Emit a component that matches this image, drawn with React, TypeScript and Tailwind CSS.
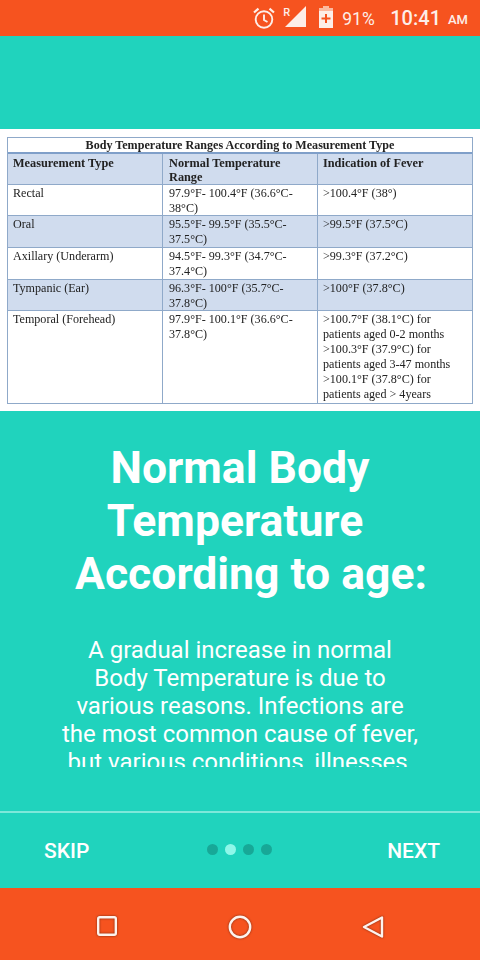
const rows = [
  { a: "Rectal", b: ["97.9°F- 100.4°F (36.6°C-", "38°C)"], c: [">100.4°F (38°)"], h: "h-[31px]", bg: "bg-white" },
  { a: "Oral", b: ["95.5°F- 99.5°F (35.5°C-", "37.5°C)"], c: [">99.5°F (37.5°C)"], h: "h-[32px]", bg: "bg-[#d0dcee]" },
  { a: "Axillary (Underarm)", b: ["94.5°F- 99.3°F (34.7°C-", "37.4°C)"], c: [">99.3°F (37.2°C)"], h: "h-[32px]", bg: "bg-white" },
  { a: "Tympanic (Ear)", b: ["96.3°F- 100°F (35.7°C-", "37.8°C)"], c: [">100°F (37.8°C)"], h: "h-[31px]", bg: "bg-[#d0dcee]" },
  {
    a: "Temporal (Forehead)",
    b: ["97.9°F- 100.1°F (36.6°C-", "37.8°C)"],
    c: [">100.7°F (38.1°C) for", "patients aged 0-2 months", ">100.3°F (37.9°C) for", "patients aged 3-47 months", ">100.1°F (37.8°C) for", "patients aged > 4years"],
    h: "h-[92px]",
    bg: "bg-white",
  },
];

function Lines({ items }: { items: string[] }) {
  return (
    <>
      {items.map((t) => (
        <div key={t} className="whitespace-nowrap">{t}</div>
      ))}
    </>
  );
}

function StatusBar() {
  return (
    <div className="h-9 bg-[#f6531f] flex items-center justify-end text-[#fdeee8] font-['Roboto',sans-serif]">
      <svg width="24" height="24" viewBox="0 0 24 24" fill="none" stroke="#fdeee8" strokeWidth="1.9" className="mr-[7px] mt-[1px]">
        <circle cx="12" cy="13.5" r="8.3" />
        <path d="M12 8.5v5.5l3.5 2" />
        <path d="M2 6.5l4.5-3.8M22 6.5l-4.5-3.8" strokeWidth="2.2" />
      </svg>
      <span className="text-[11px] font-medium self-start mt-[5px] mr-[-7px] w-[9px]">R</span>
      <svg width="22" height="22" viewBox="0 0 22 22" className="mb-[1px] mr-[12px]">
        <path d="M0 21 L21 0 V21 Z" fill="#fdeee8" />
      </svg>
      <svg width="14" height="22" viewBox="0 0 14 22" className="mr-[9px] mb-[2px]">
        <path d="M4 0h6v2h4v3H0V2h4z" fill="#fbb9a0" />
        <path d="M0 5h14v17H0z" fill="#fdeee8" />
        <path d="M6 8h2v3.5h3.5v2H8V17H6v-3.5H2.5v-2H6z" fill="#f6531f" />
      </svg>
      <span className="text-[17.5px] w-[33px] mr-[15px] mt-[2px] whitespace-nowrap">91%</span>
      <span className="text-[20px] font-medium mr-[7px] mt-[1px]">10:41</span>
      <span className="text-[13px] font-medium mr-[12px] mt-[4px]">AM</span>
    </div>
  );
}

function MedicalTable() {
  return (
    <div className="bg-white h-[282px] pt-2 pl-[7px] pr-[7px]">
      <div className="w-[466px] h-[267px] border border-[#8fa9c9] font-['Liberation_Serif',serif] text-[12.1px] leading-[15px] text-[#222] blur-[0.35px]">
        <div className="h-[16px] text-center font-bold text-[12.1px] leading-[14px] border-b-2 border-[#7f9fc9]">
          Body Temperature Ranges According to Measurement Type
        </div>
        <div className="h-[31px] flex bg-[#d0dcee] font-bold text-[12.3px] leading-[14.5px] border-b border-[#8fa9c9]">
          <div className="w-[155px] pl-[5px] pt-[2px] border-r border-[#8fa9c9]">Measurement Type</div>
          <div className="w-[155px] pl-[6px] pt-[2px] border-r border-[#8fa9c9]">
            <div>Normal Temperature</div>
            <div>Range</div>
          </div>
          <div className="flex-1 pl-[5px] pt-[2px]">Indication of Fever</div>
        </div>
        {rows.map((r, i) => (
          <div key={r.a} className={`${r.h} ${r.bg} flex pt-[1px] ${i < rows.length - 1 ? "border-b border-[#8fa9c9]" : ""}`}>
            <div className="w-[155px] pl-[5px] border-r border-[#8fa9c9] -mt-[1px] pt-[1px] whitespace-nowrap">{r.a}</div>
            <div className="w-[155px] pl-[6px] border-r border-[#8fa9c9] -mt-[1px] pt-[1px]"><Lines items={r.b} /></div>
            <div className="flex-1 pl-[5px] -mt-[1px] pt-[1px]"><Lines items={r.c} /></div>
          </div>
        ))}
      </div>
    </div>
  );
}

function NavBar() {
  return (
    <div className="h-[72px] bg-[#f6531f] flex items-center justify-center gap-[108px] pt-[5px]">
      <svg width="24" height="24" viewBox="0 0 24 24" fill="none" stroke="#fdf3ee" strokeWidth="2.4" className="mb-[2px] drop-shadow-[0_0_1px_#7a2a10]">
        <rect x="3.2" y="3.2" width="17.6" height="17.6" rx="1.5" />
      </svg>
      <svg width="26" height="26" viewBox="0 0 26 26" fill="none" stroke="#fdf3ee" strokeWidth="2.4" className="drop-shadow-[0_0_1px_#7a2a10]">
        <circle cx="13" cy="13" r="10.2" />
      </svg>
      <svg width="24" height="24" viewBox="0 0 24 24" fill="none" stroke="#fdf3ee" strokeWidth="2.4" strokeLinejoin="round" className="drop-shadow-[0_0_1px_#7a2a10]">
        <path d="M21 2.5v19L3 12z" />
      </svg>
    </div>
  );
}

export default function App() {
  return (
    <div className="w-[480px] h-[960px] flex flex-col bg-[#20d3bd] font-['Roboto',sans-serif] text-white overflow-hidden">
      <StatusBar />
      <div className="h-[93px]" />
      <MedicalTable />
      <div className="h-[357px] overflow-hidden text-center">
        <div className="pt-[31px] text-[44.5px] font-bold leading-[53px] whitespace-pre">
          <div>Normal Body</div>
          <div className="pr-[10px]">Temperature</div>
          <div className="pl-[22px]">According to age:</div>
        </div>
        <div className="mt-[35px] text-[24px] leading-[28px] whitespace-nowrap text-white">
          <div>A gradual increase in normal</div>
          <div>Body Temperature is due to</div>
          <div>various reasons. Infections are</div>
          <div>the most common cause of fever,</div>
          <div>but various conditions, illnesses,</div>
        </div>
      </div>
      <div className="h-[44px]" />
      <div className="h-[2px] bg-[#7de8da]" />
      <div className="h-[75px] flex items-center pl-[44px] pr-[40px]">
        <span className="flex-1 text-[21px] font-medium mt-[2px]">SKIP</span>
        <div className="flex gap-[7px] mb-[2px] mr-[6px]">
          <span className="w-[11px] h-[11px] rounded-full bg-[#17a897]" />
          <span className="w-[11px] h-[11px] rounded-full bg-[#8ff7e9]" />
          <span className="w-[11px] h-[11px] rounded-full bg-[#17a897]" />
          <span className="w-[11px] h-[11px] rounded-full bg-[#17a897]" />
        </div>
        <span className="flex-1 text-right text-[21px] font-medium mt-[2px]">NEXT</span>
      </div>
      <NavBar />
    </div>
  );
}
